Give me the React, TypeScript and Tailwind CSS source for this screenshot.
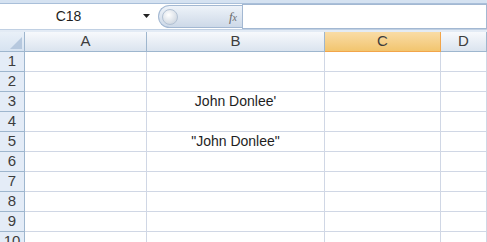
import React from "react"

const cols = ["A", "B", "C", "D"]
const widths = ["w-[122px]", "w-[178px]", "w-[116px]", "flex-1"]

const cells: Record<string, string> = {
  "3-B": "John Donlee'",
  "5-B": "\"John Donlee\"",
}

export default function App() {
  const rows = Array.from({ length: 10 }, (_, i) => i + 1)

  return (
    <div className="w-[487px] h-[242px] overflow-hidden bg-white font-['Liberation_Sans',sans-serif] text-[14px] text-[#1e1e1e]">
      {/* ribbon bottom edge */}
      <div className="h-[4px] bg-[#d5e2f1] border-b border-[#a9bfd9]" />

      {/* formula bar */}
      <div className="flex h-[25px] items-stretch bg-white">
        <div className="flex w-[158px] items-center">
          <span className="flex-1 text-center pr-[6px] text-[14px]">C18</span>
          <svg width="8" height="5" viewBox="0 0 8 5" className="mr-[7px]">
            <path d="M0 0h7L3.5 4z" fill="#222" />
          </svg>
        </div>
        <div className="my-[1px] flex w-[84px] items-center rounded-l-full border border-r-0 border-[#a3b8d2] bg-gradient-to-b from-[#eef3f9] to-[#cdd9e8]">
          <div className="ml-[3px] h-[16px] w-[16px] rounded-full border border-[#b3c2d4] bg-[radial-gradient(circle_at_40%_35%,#ffffff,#c3cdd9)]" />
          <span className="ml-auto mr-[5px] font-['Liberation_Serif',serif] italic text-[13px] text-[#6b6b6b]">
            f<span className="text-[10px]">x</span>
          </span>
        </div>
        <div className="flex-1 border border-[#a3b8d2] bg-white" />
      </div>
      <div className="h-[3px] bg-[#e3ebf5] border-t border-[#c0d0e3]" />

      {/* column headers */}
      <div className="flex h-[20px]">
        <div className="relative w-[25px] border-r border-b border-[#9eb6ce] bg-gradient-to-b from-[#e9f0f8] to-[#d7e3f1]">
          <svg width="12" height="12" viewBox="0 0 12 12" className="absolute right-[2px] bottom-[2px]">
            <path d="M12 0V12H0z" fill="#b6c8de" />
          </svg>
        </div>
        {cols.map((c, i) => (
          <div
            key={c}
            className={`${widths[i]} flex items-center justify-center border-r border-b text-[15px] ${
              c === "C"
                ? "border-[#f2a54a] bg-gradient-to-b from-[#f9dca6] to-[#f2c56e] text-[#3d3d3d]"
                : "border-[#9eb6ce] bg-gradient-to-b from-[#f7f9fc] to-[#dbe4ef] text-[#3d3d3d]"
            }`}
          >
            {c}
          </div>
        ))}
      </div>

      {/* rows */}
      {rows.map((r) => (
        <div key={r} className="flex h-[20px]">
          <div className="flex w-[25px] items-center justify-center border-r border-b border-[#9eb6ce] bg-[#e4ecf7] text-[15px] text-[#3d3d3d]">
            {r}
          </div>
          {cols.map((c, i) => (
            <div
              key={c}
              className={`${widths[i]} flex items-center justify-center border-r border-b border-[#d0d7e5] whitespace-nowrap`}
            >
              {cells[`${r}-${c}`] ?? ""}
            </div>
          ))}
        </div>
      ))}
    </div>
  )
}
